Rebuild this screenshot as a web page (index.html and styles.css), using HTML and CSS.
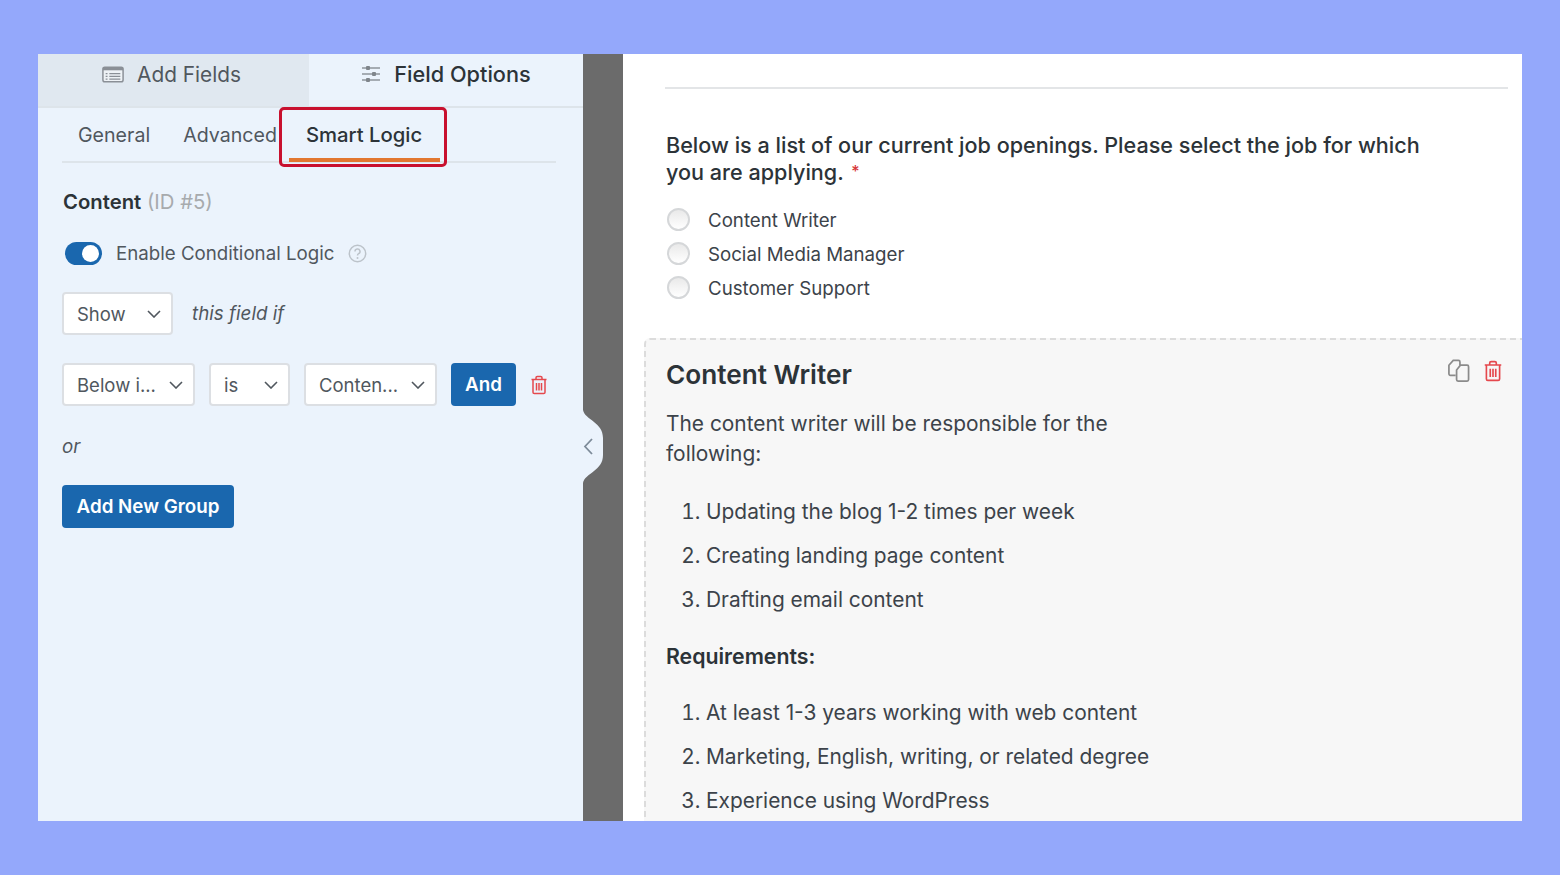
FILE: index.html
```html
<!DOCTYPE html>
<html lang="en">
<head>
<meta charset="UTF-8"><meta name="viewport" content="width=device-width,initial-scale=1.0">
<title>Smart Logic</title>
<link rel="stylesheet" href="styles.css">
</head>
<body>
<div class="frame">

  <!-- left panel -->
  <aside class="side">
    <div class="top-tabs">
      <div class="top-tab off">
        <svg class="tab-ico" width="22" height="17" viewBox="0 0 24 18"><rect x="1" y="1" width="22" height="16" rx="2" fill="#eef2f6" stroke="#8a8f96" stroke-width="1.6"/><rect x="1" y="1" width="22" height="3.4" fill="#8a8f96"/><path d="M4 8h2M8 8h12M4 11h2M8 11h12M4 14h2M8 14h12" stroke="#8a8f96" stroke-width="1.3"/></svg>
        <span>Add Fields</span>
      </div>
      <div class="top-tab on">
        <svg class="tab-ico" width="20" height="18" viewBox="0 0 20 18"><path d="M1 3h18M1 9h18M1 15h18" stroke="#8f959b" stroke-width="1.5"/><rect x="5" y="1" width="4" height="4" rx="1" fill="#7f858b"/><rect x="11" y="7" width="4" height="4" rx="1" fill="#7f858b"/><rect x="5" y="13" width="4" height="4" rx="1" fill="#7f858b"/></svg>
        <span>Field Options</span>
      </div>
    </div>

    <div class="sub-tabs">
      <span class="sub-tab general">General</span>
      <span class="sub-tab advanced">Advanced</span>
      <span class="sub-tab active"><b>Smart Logic</b></span>
    </div>

    <div class="side-body">
      <div class="field-title"><b>Content</b> <span>(ID #5)</span></div>

      <div class="toggle-row">
        <span class="toggle"><i></i></span>
        <span>Enable Conditional Logic</span>
        <svg class="help" width="19" height="19" viewBox="0 0 19 19"><circle cx="9.5" cy="9.5" r="8.2" fill="none" stroke="#bcc3ca" stroke-width="1.5"/><path d="M7 7.5a2.5 2.5 0 1 1 3.6 2.2c-.8.4-1.1.9-1.1 1.8" fill="none" stroke="#bcc3ca" stroke-width="1.5"/><circle cx="9.5" cy="14" r="1" fill="#bcc3ca"/></svg>
      </div>

      <div class="show-row">
        <div class="sel w-show">Show<svg class="chev" width="14" height="8" viewBox="0 0 14 8"><path d="M1 1l6 6 6-6" fill="none" stroke="#50575e" stroke-width="1.6"/></svg></div>
        <em>this field if</em>
      </div>

      <div class="rule-row">
        <div class="sel w-below">Below i...<svg class="chev" width="14" height="8" viewBox="0 0 14 8"><path d="M1 1l6 6 6-6" fill="none" stroke="#50575e" stroke-width="1.6"/></svg></div>
        <div class="sel w-is">is<svg class="chev" width="14" height="8" viewBox="0 0 14 8"><path d="M1 1l6 6 6-6" fill="none" stroke="#50575e" stroke-width="1.6"/></svg></div>
        <div class="sel w-cont">Conten...<svg class="chev" width="14" height="8" viewBox="0 0 14 8"><path d="M1 1l6 6 6-6" fill="none" stroke="#50575e" stroke-width="1.6"/></svg></div>
        <button class="btn and">And</button>
        <svg class="trash" width="18" height="20" viewBox="0 0 18 20"><path d="M1.5 4.500h15M6 4.500V2.800C6 2 6.600 1.500 7.300 1.500h3.400c.7 0 1.300.5 1.300 1.300v1.700M3 4.500v12.700c0 .8.600 1.300 1.300 1.300h9.400c.7 0 1.300-.5 1.300-1.300V4.500M6.500 8v7.500M9 8v7.500M11.500 8v7.500" fill="none" stroke="#e5484d" stroke-width="1.500"/></svg>
      </div>

      <div class="or">or</div>
      <button class="btn group">Add New Group</button>
    </div>
  </aside>

  <!-- dark strip + collapse handle -->
  <div class="gutter">
    <svg class="handle" width="22" height="73" viewBox="0 0 22 73"><path d="M0 0C2 10 20 12 20 28v17C20 61 2 63 0 73z" fill="#ebf3fc"/><path d="M9 29l-7 7.500 7 7.500" fill="none" stroke="#7d8b99" stroke-width="1.800"/></svg>
  </div>

  <!-- form preview -->
  <main class="form">
    <hr class="rule">
    <div class="q-label">Below is a list of our current job openings. Please select the job for which you are applying. <span class="req">*</span></div>
    <ul class="radios">
      <li><i class="radio"></i>Content Writer</li>
      <li><i class="radio"></i>Social Media Manager</li>
      <li><i class="radio"></i>Customer Support</li>
    </ul>

    <section class="card">
      <div class="card-tools">
        <svg width="23" height="23" viewBox="0 0 24 24"><path d="M9 17H3.500C2.700 17 2 16.300 2 15.500V6.500L6.500 1.500h5.500c.8 0 1.500.7 1.500 1.500v3.500" fill="none" stroke="#8b8b8b" stroke-width="1.800"/><path d="M14 6.500h7c.8 0 1.500.7 1.500 1.500v13.500c0 .8-.7 1.500-1.500 1.500h-9.500c-.8 0-1.500-.7-1.500-1.500V11.500z" fill="none" stroke="#8b8b8b" stroke-width="1.800"/></svg>
        <svg width="20" height="22" viewBox="0 0 18 20"><path d="M1.500 4.500h15M6 4.500V2.800C6 2 6.600 1.500 7.300 1.500h3.400c.7 0 1.300.5 1.300 1.300v1.700M3 4.500v12.700c0 .8.600 1.300 1.300 1.300h9.400c.7 0 1.300-.5 1.300-1.300V4.500M6.500 8v7.500M9 8v7.500M11.500 8v7.500" fill="none" stroke="#e5484d" stroke-width="1.500"/></svg>
      </div>
      <h2>Content Writer</h2>
      <p class="intro">The content writer will be responsible for the following:</p>
      <ol>
        <li>Updating the blog 1-2 times per week</li>
        <li>Creating landing page content</li>
        <li>Drafting email content</li>
      </ol>
      <p class="req-title">Requirements:</p>
      <ol>
        <li>At least 1-3 years working with web content</li>
        <li>Marketing, English, writing, or related degree</li>
        <li>Experience using WordPress</li>
      </ol>
    </section>
  </main>
</div>
</body>
</html>
```

FILE: styles.css
```css
:root{--bg:#94a8fb;--side:#ebf3fc;--blue:#1a67ae;--txt:#2c3338;--line:#dde4ea}
*{box-sizing:border-box}
body{margin:0;height:875px;padding:54px 38px;background:var(--bg);font-family:'Inter',sans-serif;color:var(--txt);overflow:hidden}
.frame{display:flex;height:767px;overflow:hidden;background:#fff}

/* left panel */
.side{width:545px;flex:none;background:var(--side)}
.top-tabs{display:flex;height:54px;border-bottom:2px solid var(--line)}
.top-tab{display:flex;align-items:center;justify-content:center;padding-bottom:12px}
.top-tab.off{width:271px;background:#e0e8f0;color:#50575e;gap:13px;padding-right:4px;font-size:20.8px}
.top-tab.on{flex:1;color:#2c3338;font-weight:500;gap:13px;font-size:21.7px}
.tab-ico{flex:none}

.sub-tabs{display:flex;height:55px;margin:0 27px 0 24px;border-bottom:2px solid var(--line);font-size:19.6px;color:#50575e;position:relative}
.sub-tab{display:flex;align-items:center;padding-top:1px}
.general{margin-left:16px}
.advanced{margin-left:33px}
.active{position:absolute;left:217px;top:-1px;width:168px;height:60px;border:3px solid #c8102e;border-radius:5px;justify-content:center;padding:0 0 5px 2px;font-size:20.3px}
.active b{font-weight:500;color:#2c3338}
.active::after{content:"";position:absolute;left:7px;right:4px;bottom:2px;height:4px;background:#e27730}

.side-body{padding:0 24px}
.field-title{font-size:20.3px;margin:25px 0 0 1px;line-height:28px}
.field-title b{font-weight:600}
.field-title span{color:#a7aaad}
.toggle-row{display:flex;align-items:center;font-size:18.7px;color:#50575e;margin-top:22px;height:30px;padding-left:3px}
.toggle{width:37px;height:23px;border-radius:12px;background:var(--blue);margin-right:14px;display:flex;justify-content:flex-end;align-items:center;padding-right:3px}
.toggle i{width:17px;height:17px;border-radius:50%;background:#fff}
.help{margin-left:14px}
.show-row{display:flex;align-items:center;margin-top:24px;gap:19px;font-size:18.8px;color:#50575e}
.sel{height:43px;background:#fff;border:2px solid #dcdfe3;border-radius:4px;display:flex;align-items:center;justify-content:space-between;padding:0 10px 0 13px;font-size:18.5px;color:#50575e;flex:none}
.w-show{width:111px}
.w-below{width:133px}
.w-is{width:81px}
.w-cont{width:133px}
.rule-row{display:flex;align-items:center;margin-top:28px;gap:14px}
.btn{border:none;background:var(--blue);color:#fff;font-family:inherit;font-weight:600;font-size:18.8px;height:43px;border-radius:4px;padding:0}
.and{width:65px}
.or{font-style:italic;font-size:18.8px;color:#50575e;margin-top:29px;line-height:24px}
.group{width:172px;margin-top:26px;display:block}

/* gutter */
.gutter{width:40px;flex:none;background:#6b6b6b;position:relative}
.handle{position:absolute;left:0;top:356px}

/* form preview */
.form{flex:1;min-width:0;padding:33px 14px 0 42px}
.rule{height:2px;border:none;background:#e3e5e7;margin:0}
.q-label{margin:43px 60px 0 1px;font-size:21.6px;line-height:27px;font-weight:500;color:#2c3338}
.req{color:#d63638;font-size:16px;margin-left:2px;vertical-align:top;line-height:24px}
.radios{list-style:none;margin:17px 0 0;padding:0 0 0 2px;font-size:18.7px;color:#3c434a}
.radios li{display:flex;align-items:center;height:34px}
.radio{width:23px;height:23px;border-radius:50%;border:2px solid #d5d7d9;background:linear-gradient(#e9e9e9,#fff);margin:-2px 18px 0 0;flex:none}
.card{position:relative;margin:33px -40px 0 -21px;padding:17px 20px 0 20px;min-height:600px;background:#f7f7f7;border:2px dashed #dcdcdc;border-radius:6px;font-size:20.9px;line-height:30px;color:#3c434a}
.card-tools{position:absolute;right:43px;top:19px;display:flex;gap:13px;align-items:center}
.card h2{margin:0;font-size:26.2px;line-height:36px;font-weight:600;color:#2c3338}
.intro{margin:16px 0 0;width:480px}
.card ol{margin:20.5px 0 0;padding:0 0 0 40px}
.card li{height:44px;line-height:44px}
.req-title{margin:19.5px 0 0;font-weight:600;font-size:21.3px;color:#2c3338}
.req-title + ol{margin-top:20px}
```
